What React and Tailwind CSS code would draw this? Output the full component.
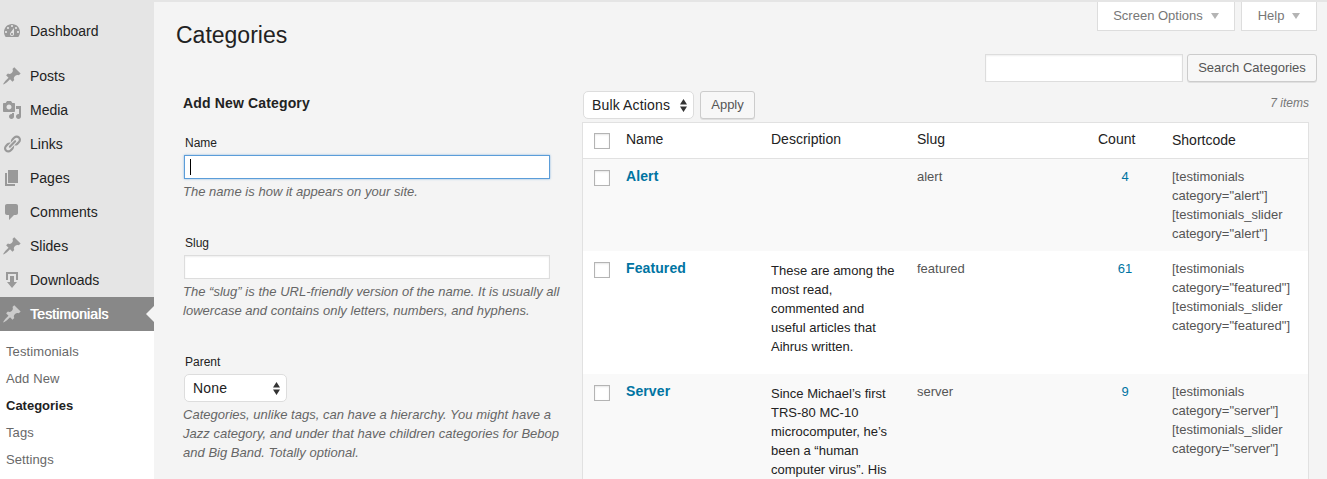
import React from "react";

const ICONS = {
  dashboard:
    "M3.76 16h12.48c1.1-1.37 1.76-3.11 1.76-5 0-4.42-3.58-8-8-8s-8 3.58-8 8c0 1.89.66 3.63 1.76 5zM10 4c.55 0 1 .45 1 1s-.45 1-1 1-1-.45-1-1 .45-1 1-1zM6 6c.55 0 1 .45 1 1s-.45 1-1 1-1-.45-1-1 .45-1 1-1zm8 0c.55 0 1 .45 1 1s-.45 1-1 1-1-.45-1-1 .45-1 1-1zm-5.37 5.55L12 7v6c0 1.1-.9 2-2 2s-2-.9-2-2c0-.57.24-1.08.63-1.45zM4 10c.55 0 1 .45 1 1s-.45 1-1 1-1-.45-1-1 .45-1 1-1zm12 0c.55 0 1 .45 1 1s-.45 1-1 1-1-.45-1-1 .45-1 1-1zm-5 3c0-.55-.45-1-1-1s-1 .45-1 1 .45 1 1 1 1-.45 1-1z",
  pin: "M10.44 3.02l1.82-1.82 6.36 6.35-1.83 1.82c-1.05-.68-2.48-.57-3.41.36l-.75.75c-.92.93-1.04 2.35-.35 3.41l-1.83 1.82-2.41-2.41-2.8 2.79c-.42.42-3.38 2.71-3.8 2.29s1.86-3.39 2.28-3.81l2.79-2.79L4.1 9.36l1.83-1.82c1.05.69 2.48.57 3.4-.36l.75-.75c.93-.92 1.05-2.35.36-3.41z",
  media:
    "M13 11V4c0-.55-.45-1-1-1h-1.67L9 1H5L3.67 3H2c-.55 0-1 .45-1 1v7c0 .55.45 1 1 1h10c.55 0 1-.45 1-1zM7 4.5c1.38 0 2.5 1.12 2.5 2.5S8.38 9.5 7 9.5 4.5 8.38 4.5 7 5.62 4.5 7 4.5zM14 6h5v10.5c0 1.38-1.12 2.5-2.5 2.5S14 17.88 14 16.5s1.12-2.5 2.5-2.5c.17 0 .34.02.5.05V9h-3V6zm-4 8.05V13h2v3.5c0 1.38-1.12 2.5-2.5 2.5S7 17.88 7 16.5 8.12 14 9.5 14c.17 0 .34.02.5.05z",
  links:
    "M17.74 2.76c1.68 1.69 1.68 4.41 0 6.1l-1.53 1.52c-1.12 1.12-2.7 1.47-4.14 1.09l2.62-2.61.76-.77.76-.76c.84-.84.84-2.2 0-3.04-.84-.85-2.2-.85-3.04 0l-.77.76-3.38 3.38c-.37-1.44-.02-3.02 1.1-4.14l1.52-1.53c1.69-1.68 4.42-1.68 6.1 0zM8.59 13.43l5.34-5.34c.42-.42.42-1.1 0-1.52-.44-.43-1.13-.39-1.53 0l-5.33 5.34c-.42.42-.42 1.1 0 1.52.44.43 1.13.39 1.52 0zm-.76 2.29l4.14-4.15c.38 1.44.03 3.02-1.09 4.14l-1.52 1.53c-1.69 1.68-4.41 1.68-6.1 0-1.68-1.68-1.68-4.42 0-6.1l1.53-1.52c1.12-1.12 2.7-1.47 4.14-1.1l-4.14 4.15c-.85.84-.85 2.2 0 3.05.84.84 2.2.84 3.04 0z",
  pages: "M6 15V2h10v13H6zm-1 1h8v2H3V5h2v11z",
  comments: "M5 2h9c1.1 0 2 .9 2 2v7c0 1.1-.9 2-2 2h-2l-5 5v-5H5c-1.1 0-2-.9-2-2V4c0-1.1.9-2 2-2z",
  downloads: "M14.01 4v6h2V2H4v8h2.01V4h8zm-2 2v6h3l-5 6-5-6h3V6h4z",
};

function MenuItem({ icon, label, active }) {
  return (
    <li
      className={
        active
          ? "flex h-[34px] items-center justify-between bg-[#888] tracking-[0.1px] text-white [text-shadow:0.5px_0_0_#fff]"
          : "flex h-[34px] items-center text-[#222]"
      }
    >
      <div className="flex items-center">
        <svg
          viewBox="0 0 20 20"
          className={active ? "ml-[2px] size-5 fill-[#ccc]" : "ml-[2px] size-5 fill-[#999]"}
        >
          <path d={ICONS[icon]} />
        </svg>
        <span className="ml-2 text-[14px] leading-[18px]">{label}</span>
      </div>
      {active && (
        <svg viewBox="0 0 8 16" className="h-4 w-2 fill-[#f4f4f4]">
          <path d="M8 0v16L0 8z" />
        </svg>
      )}
    </li>
  );
}

const MENU = [
  ["pin", "Posts"],
  ["media", "Media"],
  ["links", "Links"],
  ["pages", "Pages"],
  ["comments", "Comments"],
  ["pin", "Slides"],
  ["downloads", "Downloads"],
];

function Sidebar() {
  return (
    <aside className="flex w-[154px] shrink-0 flex-col bg-[#e5e5e5] pt-[14px]">
      <ul>
        <MenuItem icon="dashboard" label="Dashboard" />
      </ul>
      <ul className="mt-[11px]">
        {MENU.map(([icon, label]) => (
          <MenuItem key={label} icon={icon} label={label} />
        ))}
        <MenuItem icon="pin" label="Testimonials" active />
      </ul>
      <ul className="grow bg-white pt-[7px] pl-[6px] text-[13px] leading-[27px] tracking-[0.1px] text-[#686868]">
        <li>Testimonials</li>
        <li>Add New</li>
        <li className="font-bold tracking-normal text-[#222]">Categories</li>
        <li>Tags</li>
        <li>Settings</li>
      </ul>
    </aside>
  );
}

function SelectBox({ label, className }) {
  return (
    <button
      className={
        "flex h-7 items-center justify-between rounded-[5px] border border-[#ddd] bg-white pr-[6px] pl-2 text-[14px] tracking-[0.15px] text-[#222] " +
        className
      }
    >
      <span>{label}</span>
      <svg viewBox="0 0 7 13" className="h-[13px] w-[7px] fill-[#333]">
        <path d="M3.5 0L7 5.4H0zM0 7.6h7L3.5 13z" />
      </svg>
    </button>
  );
}

function Tab({ label, className }) {
  return (
    <button
      className={
        "flex h-[29px] items-center justify-center gap-2 border border-t-0 border-[#ddd] bg-white text-[13px] text-[#777] " +
        className
      }
    >
      <span>{label}</span>
      <svg viewBox="0 0 8 6" className="h-[6px] w-2 fill-[#b4b4b4]">
        <path d="M0 0h8L4 6z" />
      </svg>
    </button>
  );
}

function Hint({ lines }) {
  return (
    <div className="mt-[3px] -ml-px text-[13px] leading-[19px] tracking-[0.02px] whitespace-nowrap text-[#666] italic">
      {lines.map((l) => (
        <div key={l}>{l}</div>
      ))}
    </div>
  );
}

function Field({ label, children, className }) {
  return (
    <div className={"flex flex-col items-start " + className}>
      <label className="ml-px text-[12px] leading-[16px] text-[#222]">{label}</label>
      {children}
    </div>
  );
}

function AddForm() {
  return (
    <section className="ml-[30px] w-[399px] shrink-0">
      <h2 className="-ml-px h-[20px] text-[14px] leading-[20px] font-bold tracking-[0.15px] text-[#222]">
        Add New Category
      </h2>
      <Field label="Name" className="mt-[22px] h-[100px]">
        <div className="mt-[4px] flex h-6 w-[366px] items-center border border-[#5b9dd9] bg-white pl-[5px] shadow-[0_0_2px_rgba(91,157,217,0.7)]">
          <div className="h-4 w-px bg-black" />
        </div>
        <Hint lines={["The name is how it appears on your site."]} />
      </Field>
      <Field label="Slug" className="h-[119px]">
        <div className="mt-[4px] h-6 w-[366px] border border-[#ddd] bg-white shadow-[inset_0_1px_2px_rgba(0,0,0,0.07)]" />
        <Hint
          lines={[
            "The “slug” is the URL-friendly version of the name. It is usually all",
            "lowercase and contains only letters, numbers, and hyphens.",
          ]}
        />
      </Field>
      <Field label="Parent" className="">
        <SelectBox label="None" className="mt-[4px] w-[103px]" />
        <Hint
          lines={[
            "Categories, unlike tags, can have a hierarchy. You might have a",
            "Jazz category, and under that have children categories for Bebop",
            "and Big Band. Totally optional.",
          ]}
        />
      </Field>
    </section>
  );
}

const ROWS = [
  { name: "Alert", slug: "alert", count: 4, desc: [] },
  {
    name: "Featured",
    slug: "featured",
    count: 61,
    desc: ["These are among the", "most read,", "commented and", "useful articles that", "Aihrus written."],
  },
  {
    name: "Server",
    slug: "server",
    count: 9,
    desc: ["Since Michael’s first", "TRS-80 MC-10", "microcomputer, he’s", "been a “human", "computer virus”. His"],
  },
];

const ROW_STYLES = ["h-[92px] bg-[#f9f9f9]", "h-[123px] bg-white", "h-[123px] bg-[#f9f9f9]"];

function Checkbox() {
  return <div className="size-4 border border-[#b4b4b4] bg-white shadow-[inset_0_1px_2px_rgba(0,0,0,0.1)]" />;
}

const COLS = "grid grid-cols-[43px_145px_146px_170px_50px_1fr] ";

function CategoryTable() {
  return (
    <div className="h-[400px] w-[727px] border border-[#e1e1e1] bg-white">
      <div className={COLS + "h-[36px] border-b border-[#e1e1e1] text-[14px] leading-[18px] text-[#222]"}>
        <div className="pt-[10px] pl-[11px]">
          <Checkbox />
        </div>
        <div className="pt-[7px]">Name</div>
        <div className="pt-[7px]">Description</div>
        <div className="pt-[7px]">Slug</div>
        <div className="pt-[7px] pl-[11px]">Count</div>
        <div className="pt-[8px] pl-[35px]">Shortcode</div>
      </div>
      {ROWS.map((r, i) => (
        <div key={r.name} className={COLS + "text-[13px] leading-[19px] whitespace-nowrap text-[#555] " + ROW_STYLES[i]}>
          <div className="pt-[11px] pl-[11px]">
            <Checkbox />
          </div>
          <div className="pt-[8px] text-[14px] font-bold tracking-[0.1px] text-[#0074a2]">{r.name}</div>
          <div className="pt-[10px] text-[#222]">
            {r.desc.map((d) => (
              <div key={d}>{d}</div>
            ))}
          </div>
          <div className="pt-[8px]">{r.slug}</div>
          <div className="w-[76px] pt-[8px] text-center text-[#0074a2]">{r.count}</div>
          <div className="pt-[8px] pl-[35px]">
            <div>[testimonials</div>
            <div>{'category="' + r.slug + '"]'}</div>
            <div>[testimonials_slider</div>
            <div>{'category="' + r.slug + '"]'}</div>
          </div>
        </div>
      ))}
    </div>
  );
}

const BUTTON =
  "flex items-center justify-center rounded-[3px] border border-[#ccc] bg-[#f7f7f7] text-[13px] text-[#555] shadow-[0_1px_0_rgba(0,0,0,0.08)] ";

export default function App() {
  return (
    <div className="flex h-[479px] w-[1327px] overflow-hidden bg-[#f4f4f4] font-['Liberation_Sans',Arial,sans-serif]">
      <Sidebar />
      <main className="flex min-w-0 grow flex-col border-t-2 border-[#e5e5e5]">
        <header className="flex h-[51px] shrink-0 justify-between pr-[10px]">
          <h1 className="mt-[18px] ml-[22px] text-[23px] leading-[30px] text-[#222]">Categories</h1>
          <div className="flex gap-[6px]">
            <Tab label="Screen Options" className="w-[138px]" />
            <Tab label="Help" className="w-[76px]" />
          </div>
        </header>
        <div className="flex h-[30px] shrink-0 items-start justify-end gap-1 pt-px pr-[10px]">
          <div className="h-7 w-[198px] border border-[#ddd] bg-white shadow-[inset_0_1px_2px_rgba(0,0,0,0.07)]" />
          <button className={BUTTON + "h-7 w-[130px]"}>Search Categories</button>
        </div>
        <div className="flex grow">
          <div className="pt-[10px]">
            <AddForm />
          </div>
          <section className="-ml-px flex w-[727px] flex-col">
            <div className="flex h-[39px] shrink-0 items-start justify-between pt-[8px] pl-[1px]">
              <div className="flex gap-[6px]">
                <SelectBox label="Bulk Actions" className="w-[111px]" />
                <button className={BUTTON + "h-7 w-[55px]"}>Apply</button>
              </div>
              <span className="mt-[3px] text-[12px] leading-[18px] text-[#777] italic">7 items</span>
            </div>
            <CategoryTable />
          </section>
        </div>
      </main>
    </div>
  );
}
